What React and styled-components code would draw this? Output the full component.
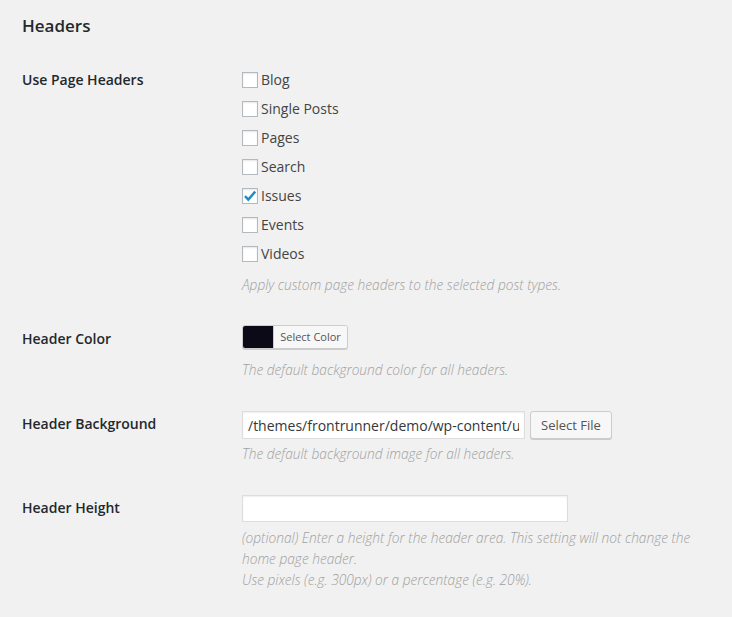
import React from "react";
import styled, { createGlobalStyle } from "styled-components";

const Global = createGlobalStyle`
  html, body { margin: 0; padding: 0; background: #f1f1f1; }
  body { font-family: "Open Sans", "Noto Sans", sans-serif; color: #444; }
  * { box-sizing: border-box; }
`;

const Page = styled.div`
  width: 732px;
  min-height: 617px;
  padding: 14px 20px 0 22px;
`;

const Heading = styled.h2`
  margin: 0 0 32px;
  font-size: 17px;
  line-height: 24px;
  font-weight: 600;
  color: #23282d;
`;

const Rows = styled.div`
  display: flex;
  flex-direction: column;
  gap: 31px;
`;

const Row = styled.div`
  display: grid;
  grid-template-columns: 220px 1fr;
  margin-top: ${(p) => p.$pull || 0}px;
`;

const Label = styled.div`
  margin-top: ${(p) => p.$offset || 0}px;
  font-size: 14px;
  line-height: 20px;
  font-weight: 600;
  color: #23282d;
`;

const Field = styled.div`
  display: flex;
  flex-direction: column;
  max-width: 470px;
`;

const CheckList = styled.div`
  display: flex;
  flex-direction: column;
  gap: 9px;
`;

const CheckItem = styled.label`
  display: flex;
  align-items: center;
  gap: 3px;
  font-size: 14px;
  line-height: 20px;
  color: #444;
`;

const Box = styled.span`
  width: 16px;
  height: 16px;
  border: 1px solid #b4b9be;
  background: #fff;
  box-shadow: inset 0 1px 2px rgba(0, 0, 0, 0.1);
  display: flex;
  align-items: center;
  justify-content: center;
`;

const Description = styled.p`
  margin: ${(p) => p.$top || 6}px 0 0;
  font-size: 13.7px;
  line-height: 21px;
  font-style: italic;
  font-weight: 300;
  color: #a0a0a0;
`;

const ColorButton = styled.div`
  display: flex;
  width: 106px;
  height: 24px;
  border: 1px solid #ccc;
  border-radius: 3px;
  background: #f7f7f7;
  box-shadow: 0 1px 0 #ccc;
  overflow: hidden;
`;

const Swatch = styled.span`
  width: 30px;
  background: ${(p) => p.$color};
`;

const ColorText = styled.span`
  flex: 1;
  border-left: 1px solid #ccc;
  font-size: 11px;
  line-height: 22px;
  color: #555;
  text-align: center;
  background: #f7f7f7;
`;

const InputRow = styled.div`
  display: flex;
  align-items: center;
  gap: 5px;
`;

const TextInput = styled.input`
  width: ${(p) => p.$width}px;
  height: ${(p) => p.$height}px;
  border: 1px solid #ddd;
  background: #fff;
  box-shadow: inset 0 1px 2px rgba(0, 0, 0, 0.07);
  padding: 0 5px;
  margin: 0;
  font-family: "Open Sans", "Noto Sans", sans-serif;
  font-size: 14px;
  color: #32373c;
  outline: none;
`;

const Button = styled.button`
  height: 28px;
  padding: 0 10px 1px;
  border: 1px solid #ccc;
  border-radius: 3px;
  background: #f7f7f7;
  box-shadow: 0 1px 0 #ccc;
  font-family: "Open Sans", "Noto Sans", sans-serif;
  font-size: 13px;
  line-height: 26px;
  color: #555;
  cursor: pointer;
`;

const Check = () => (
  <svg width="14" height="14" viewBox="0 0 14 14">
    <path d="M2 7.2 L5.3 10.6 L12.2 2.6" fill="none" stroke="#1e8cbe" strokeWidth="2.4" strokeLinejoin="miter" />
  </svg>
);

const types = [
  ["Blog", false],
  ["Single Posts", false],
  ["Pages", false],
  ["Search", false],
  ["Issues", true],
  ["Events", false],
  ["Videos", false],
];

export default function App() {
  return (
    <>
      <Global />
      <Page>
        <Heading>Headers</Heading>
        <Rows>
          <Row>
            <Label>Use Page Headers</Label>
            <Field>
              <CheckList>
                {types.map(([name, checked]) => (
                  <CheckItem key={name}>
                    <Box>{checked && <Check />}</Box>
                    {name}
                  </CheckItem>
                ))}
              </CheckList>
              <Description $top={10}>Apply custom page headers to the selected post types.</Description>
            </Field>
          </Row>
          <Row $pull={-1}>
            <Label $offset={4}>Header Color</Label>
            <Field>
              <ColorButton>
                <Swatch $color="#0b0a16" />
                <ColorText>Select Color</ColorText>
              </ColorButton>
              <Description $top={10}>The default background color for all headers.</Description>
            </Field>
          </Row>
          <Row>
            <Label $offset={3}>Header Background</Label>
            <Field>
              <InputRow>
                <TextInput
                  $width={283}
                  $height={28}
                  readOnly
                  value="/themes/frontrunner/demo/wp-content/uploads/header-bg.jpg"
                />
                <Button>Select File</Button>
              </InputRow>
              <Description $top={4}>The default background image for all headers.</Description>
            </Field>
          </Row>
          <Row>
            <Label $offset={3}>Header Height</Label>
            <Field>
              <TextInput $width={326} $height={27} readOnly value="" />
              <Description $top={5}>
                (optional) Enter a height for the header area. This setting will not change the home page header.
                <br />
                Use pixels (e.g. 300px) or a percentage (e.g. 20%).
              </Description>
            </Field>
          </Row>
        </Rows>
      </Page>
    </>
  );
}
